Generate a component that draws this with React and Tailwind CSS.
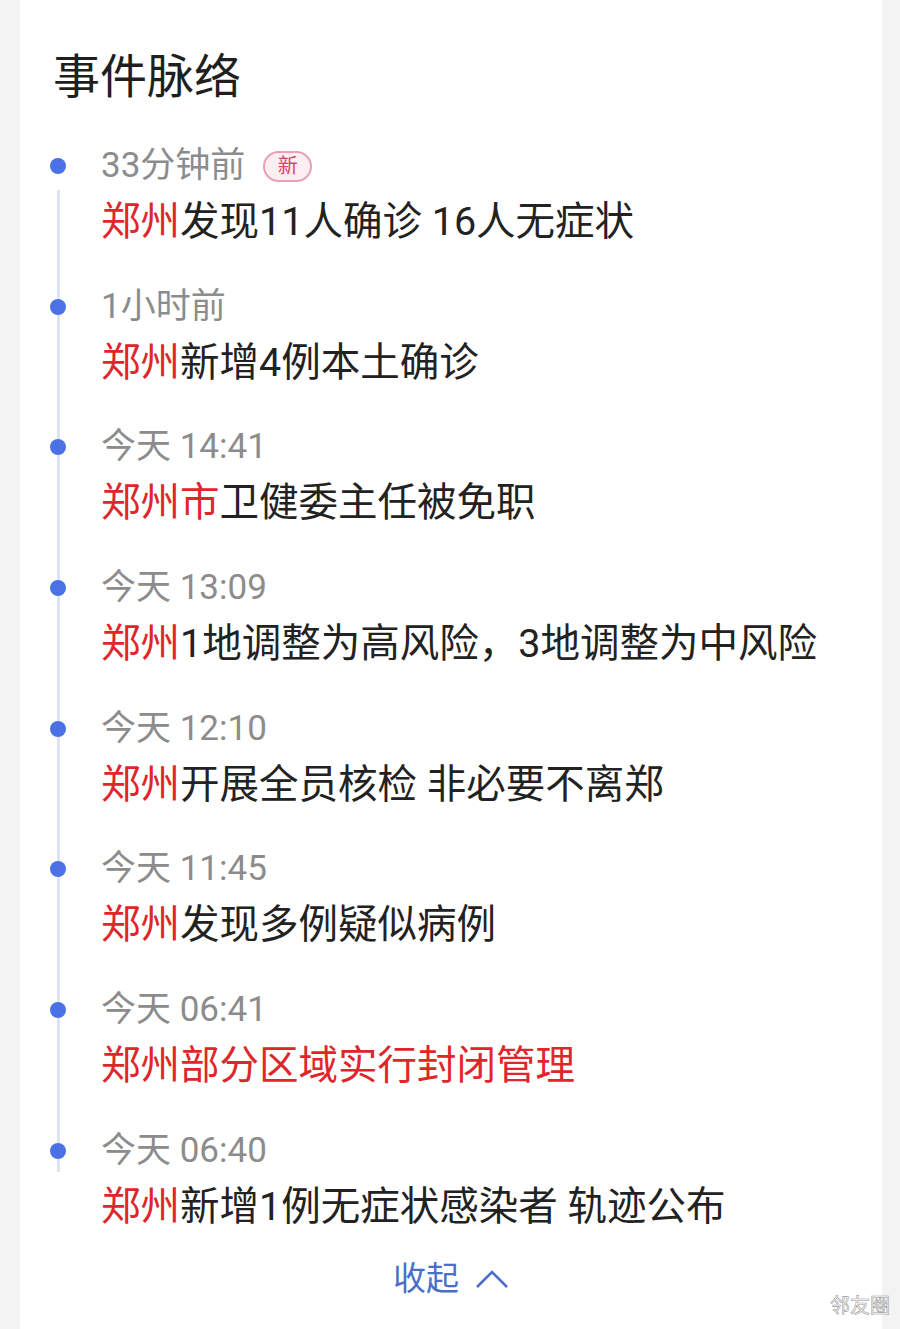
import React from 'react';

const events = [
  { time: '33分钟前', isNew: true, red: '郑州', rest: '发现11人确诊 16人无症状' },
  { time: '1小时前', red: '郑州', rest: '新增4例本土确诊' },
  { time: '今天 14:41', red: '郑州市', rest: '卫健委主任被免职' },
  { time: '今天 13:09', red: '郑州', rest: '1地调整为高风险，3地调整为中风险' },
  { time: '今天 12:10', red: '郑州', rest: '开展全员核检 非必要不离郑' },
  { time: '今天 11:45', red: '郑州', rest: '发现多例疑似病例' },
  { time: '今天 06:41', red: '郑州部分区域实行封闭管理', rest: '' },
  { time: '今天 06:40', red: '郑州', rest: '新增1例无症状感染者 轨迹公布' },
];

const TimelineItem = ({ item, first, last }) => {
  return (
    <div className="flex">
      {/* dot + rail */}
      <div className="w-[16px] flex flex-col items-center">
        <div className={`w-[3px] h-[14px] ${first ? 'bg-transparent' : 'bg-[#dfe4f4]'}`} />
        <div className="w-[16px] h-[16px] rounded-full bg-[#4a72e6]" />
        {last ? (
          <div className="w-[3px] h-[13px] bg-[#dfe4f4]" />
        ) : (
          <div className={`w-[3px] flex-1 bg-[#dfe4f4] ${first ? 'mt-[16px]' : ''}`} />
        )}
      </div>

      {/* content */}
      <div className={`ml-[35px] ${last ? 'pb-0' : 'pb-[38.7px]'}`}>
        <div className="flex items-center h-[44px]">
          <span className="text-[35px] leading-[44px] text-[#8c8c8c]">{item.time}</span>
          {item.isNew && (
            <span className="ml-[18px] w-[49px] h-[31px] flex items-center justify-center rounded-full border-2 border-[#eaa0b0] bg-[#fdeef2] text-[20px] leading-none text-[#d2456b]">
              新
            </span>
          )}
        </div>
        <div className="mt-[10px] h-[48px] text-[39.5px] leading-[48px] text-[#222222] whitespace-nowrap">
          <span className="text-[#e0262b]">{item.red}</span>
          {item.rest}
        </div>
      </div>
    </div>
  );
};

const App = () => {
  return (
    <div
      className="min-h-[1329px] bg-[#f3f3f3] flex justify-start"
      style={{ fontFamily: 'Roboto, "Noto Sans CJK SC", sans-serif' }}
    >
      <div className="relative ml-[20px] w-[862px] min-h-[1329px] bg-white pl-[30px] pt-[49px]">
        <h2 className="ml-[3px] text-[47px] leading-[56px] font-normal text-[#1f1f1f]">事件脉络</h2>

        <div className="mt-[39px]">
          {events.map((item, index) => (
            <TimelineItem
              key={index}
              item={item}
              first={index === 0}
              last={index === events.length - 1}
            />
          ))}
        </div>

        {/* collapse */}
        <div className="mt-[24px] -ml-[30px] flex justify-center items-center h-[48px]">
          <span className="text-[33px] leading-[48px] text-[#4a6fc9]">收起</span>
          <svg width="34" height="22" viewBox="0 0 34 22" className="ml-[16px]">
            <polyline points="2,19 17,4 32,19" fill="none" stroke="#4a6fc9" strokeWidth="2.6" />
          </svg>
        </div>

        {/* watermark */}
        <div className="absolute right-[-8px] bottom-[13px] text-[20px] leading-none text-white [-webkit-text-stroke:0.6px_#9a9a9a]">
          邻友圈
        </div>
      </div>
    </div>
  );
};

export default App;
